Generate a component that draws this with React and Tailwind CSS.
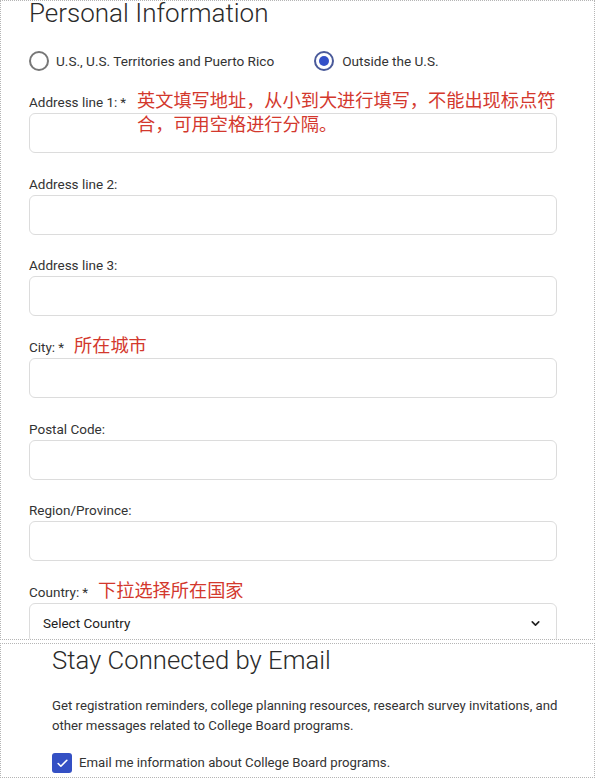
import { ChevronDown, Check } from "lucide-react";

const font = { fontFamily: "Roboto, 'Noto Sans CJK SC', sans-serif" };

function Field({ label, required, note, noteWide, select }) {
    return (
        <div className="relative mt-[19.7px] first:mt-0">
            <div className="h-[22px] flex items-center text-[13.5px] text-[#333]">
                {label}{required && <span className="ml-[3px]">*</span>}
            </div>
            {note && (
                <div className={`absolute top-[-2px] text-[18.2px] leading-[24px] text-[#d3382d] ${noteWide ? "left-[108px] w-[430px]" : "left-[45px]"}`}>
                    {note}
                </div>
            )}
            {select ? (
                <div className="h-[40px] rounded-[6px] border border-[#dcdcdc] flex items-center justify-between pl-[13px] pr-[14px] text-[13.5px] text-[#222]">
                    Select Country
                    <ChevronDown size={13} strokeWidth={3} />
                </div>
            ) : (
                <div className="h-[40px] rounded-[6px] border border-[#dcdcdc]" />
            )}
        </div>
    );
}

export default function App() {
    return (
        <div className="w-[600px] h-[781px] bg-white text-[#333]" style={font}>
            <div className="w-[595px] h-[640px] border border-dotted border-[#b5b5b5] overflow-hidden pl-[28px] pr-[37px]">
                <h1 className="text-[26px] font-light leading-[28px] mt-[-2px] text-[#2b2b2b]">Personal Information</h1>
                <div className="flex items-center h-[20px] mt-[24px] text-[13.6px]">
                    <span className="w-[20px] h-[20px] rounded-full border-2 border-[#777]" />
                    <span className="ml-[7px]">U.S., U.S. Territories and Puerto Rico</span>
                    <span className="ml-[40px] w-[20px] h-[20px] rounded-full border-2 border-[#4a5a9a] flex items-center justify-center">
                        <span className="w-[10px] h-[10px] rounded-full bg-[#3350c8]" />
                    </span>
                    <span className="ml-[8px]">Outside the U.S.</span>
                </div>
                <div className="mt-[20px]">
                    <Field label="Address line 1:" required noteWide note="英文填写地址，从小到大进行填写，不能出现标点符合，可用空格进行分隔。" />
                    <Field label="Address line 2:" />
                    <Field label="Address line 3:" />
                    <Field label="City:" required note="所在城市" />
                    <Field label="Postal Code:" />
                    <Field label="Region/Province:" />
                    <Field label="Country:" required note={<span className="ml-[24px]">下拉选择所在国家</span>} select />
                </div>
            </div>
            <div className="w-[595px] h-[135px] mt-[3px] border border-dotted border-[#b5b5b5] pl-[51px] pr-[30px]">
                <h2 className="text-[25.7px] font-light leading-[30px] mt-[1px] text-[#2b2b2b]">Stay Connected by Email</h2>
                <p className="mt-[21px] text-[13.2px] leading-[20px] text-[#333]">
                    Get registration reminders, college planning resources, research survey invitations, and other messages related to College Board programs.
                </p>
                <div className="flex items-center mt-[17px]">
                    <span className="w-[20px] h-[20px] rounded-[3px] bg-[#3450c4] flex items-center justify-center text-white">
                        <Check size={13} strokeWidth={3} />
                    </span>
                    <span className="ml-[7px] text-[13.2px] text-[#333]">Email me information about College Board programs.</span>
                </div>
            </div>
        </div>
    );
}
